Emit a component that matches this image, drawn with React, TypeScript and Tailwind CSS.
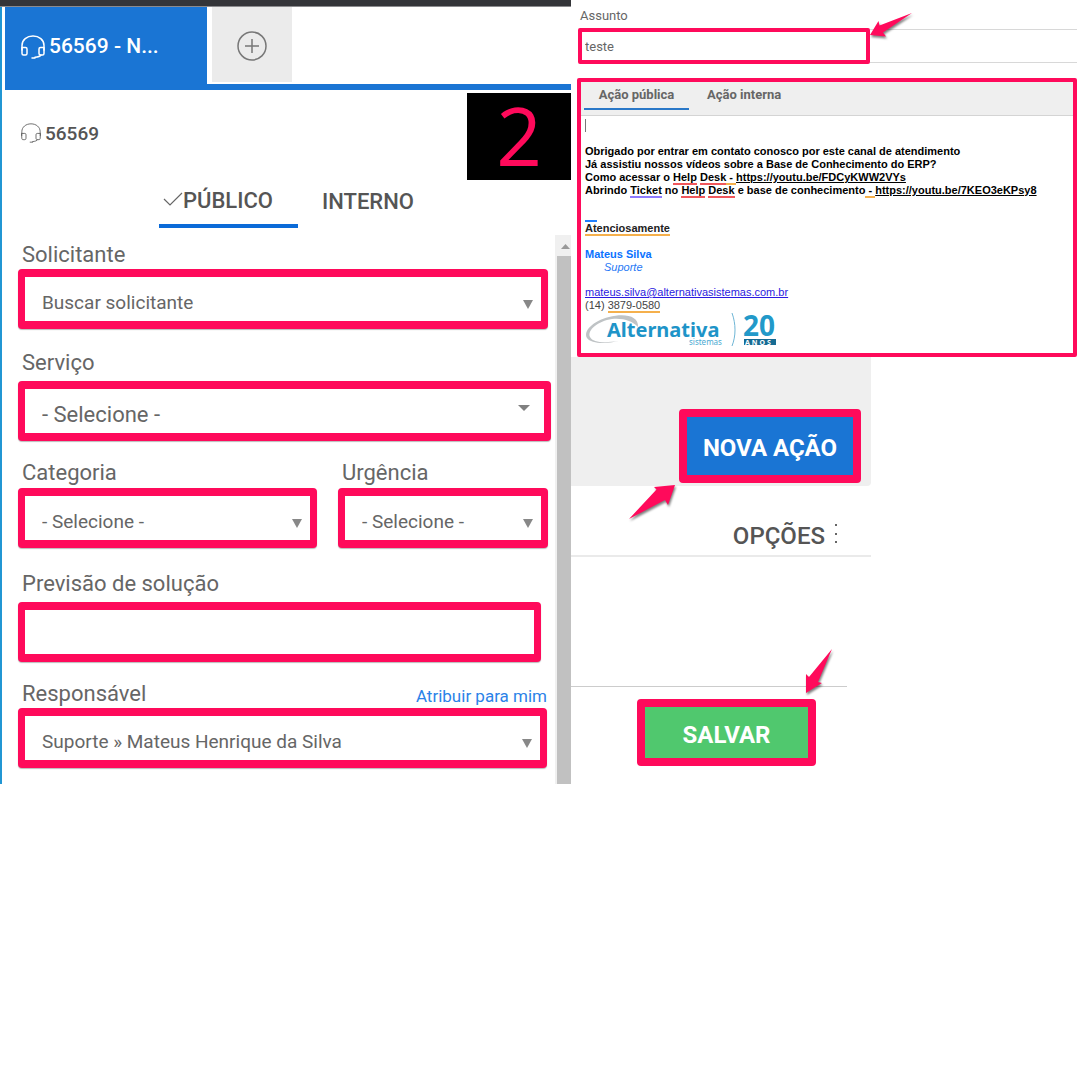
import React from "react";

function Headset({ className }: { className: string }) {
  return (
    <svg viewBox="0 0 24 24" fill="none" stroke="currentColor" strokeLinecap="round" strokeLinejoin="round" className={className} aria-hidden="true">
      <path d="M1 15V10.500C1 4.800 5.900 1 12 1s11 3.800 11 9.500V15" />
      <path d="M1 12.500h3.500c.9 0 1.500.6 1.500 1.500v4.500c0 .9-.6 1.500-1.500 1.500H2.500c-1 0-1.500-.6-1.500-1.500z" />
      <path d="M23 12.500h-3.500c-.9 0-1.500.6-1.500 1.500v4.500c0 .9.600 1.500 1.500 1.500h2c1 0 1.500-.6 1.500-1.500z" />
      <path d="M20 20c-1 1.500-3 2-6 2.300M11 23h3" />
    </svg>
  );
}

function Frame({ children }: { children: React.ReactNode }) {
  return (
    <div className="relative h-[60px] rounded-[4px] border-x-[7px] border-y-8 border-[#ff0a5b] bg-white shadow-[0_1px_1px_#bbb]">
      {children}
    </div>
  );
}

function Select({ id, value, large = false }: { id: string; value: string; large?: boolean }) {
  return (
    <>
      <select
        id={id}
        defaultValue={value}
        className={`h-full w-full appearance-none bg-transparent pl-[17px] text-[#666] outline-none ${large ? "pt-[6px] text-[22px]" : "pt-2 text-[19px]"}`}
      >
        <option>{value}</option>
      </select>
      {large ? (
        <svg viewBox="0 0 12 6" className="pointer-events-none absolute top-4 right-[14px] h-[6px] w-3" aria-hidden="true">
          <path d="M0 0h12L6 6z" fill="#808080" />
        </svg>
      ) : (
        <svg viewBox="0 0 10 9" className="pointer-events-none absolute top-[23px] right-2 h-[9px] w-[10px]" aria-hidden="true">
          <path d="M0 0h10L5 9z" fill="#888" />
        </svg>
      )}
    </>
  );
}

function Arrow({ className, d, box }: { className: string; d: string; box: string }) {
  return (
    <svg viewBox={box} className={`pointer-events-none absolute overflow-visible drop-shadow-[1px_2px_1px_rgba(0,0,0,0.5)] ${className}`} aria-hidden="true">
      <path d={d} fill="#ff0a5b" />
    </svg>
  );
}

const label = "block pt-0.5 text-[22px] leading-7 text-[#666]";

function TicketPanel() {
  return (
    <section className="flex flex-col">
      <div className="h-[7px] border-b border-[#8b8b8e] bg-[#343539]" />
      <div className="flex grow flex-col border-l-2 border-[#2196d3]">
        <nav className="ml-[3px] flex h-[83px] border-b-[6px] border-[#1a75d4]">
          <button type="button" className="-mb-[6px] flex w-[202px] items-center gap-1 bg-[#1a75d4] pl-4 text-[21px] font-medium text-white">
            <Headset className="mb-1 size-6 stroke-[1.5]" />
            <span className="mb-[3px]">56569 - N...</span>
          </button>
          <button type="button" aria-label="Novo" className="mb-[2px] ml-[5px] flex w-20 items-center justify-center bg-[#ebebeb] text-[#777]">
            <svg viewBox="0 0 30 30" fill="none" stroke="currentColor" strokeWidth="1.5" className="mt-0.5 size-[30px]" aria-hidden="true">
              <circle cx="15" cy="15" r="14" />
              <path d="M15 8v14M8 15h14" />
            </svg>
          </button>
        </nav>
        <div className="flex justify-between pt-[3px]">
          <h1 className="flex h-[82px] items-center gap-1 pl-[19px] text-[19px] font-medium text-[#555]">
            <Headset className="mb-0.5 size-5 stroke-1" />
            56569
          </h1>
          <div className="flex h-[87px] w-[104px] items-center justify-center bg-black pb-1 font-['Open_Sans',sans-serif] text-[80px] leading-none text-[#ff0a5b]">
            2
          </div>
        </div>
        <div className="ml-[157px] flex text-[22px] leading-[30px] font-medium text-[#555]">
          <button type="button" className="flex h-12 w-[139px] items-center border-b-4 border-[#0b6bd8] pb-0.5 pl-1">
            <svg viewBox="0 0 20 14" fill="none" stroke="#666" strokeWidth="1.2" className="mb-1 h-[14px] w-5" aria-hidden="true">
              <path d="M1 7l6 6L19 1" />
            </svg>
            PÚBLICO
          </button>
          <button type="button" className="ml-6 flex h-12 items-center pb-1">INTERNO</button>
        </div>
        <div className="flex grow pt-[7px]">
          <form className="flex grow flex-col gap-4 pt-1 pr-1 pb-4 pl-4">
            <div className="mr-[3px]">
              <label htmlFor="solicitante" className={`${label} pl-1`}>Solicitante</label>
              <Frame><Select id="solicitante" value="Buscar solicitante" /></Frame>
            </div>
            <div className="pt-0.5">
              <label htmlFor="servico" className={`${label} mb-1 pl-1`}>Serviço</label>
              <Frame><Select id="servico" value="- Selecione -" large /></Frame>
            </div>
            <div className="mr-[3px] grid grid-cols-[299fr_210fr] gap-[21px]">
              <div>
                <label htmlFor="categoria" className={`${label} mb-px pl-1`}>Categoria</label>
                <Frame><Select id="categoria" value="- Selecione -" /></Frame>
              </div>
              <div>
                <label htmlFor="urgencia" className={`${label} mb-px pl-1`}>Urgência</label>
                <Frame><Select id="urgencia" value="- Selecione -" /></Frame>
              </div>
            </div>
            <div className="mr-[10px] pt-1">
              <label htmlFor="previsao" className={`${label} mb-1 pl-1`}>Previsão de solução</label>
              <Frame><input id="previsao" type="text" className="h-full w-full px-4 text-[19px] outline-none" /></Frame>
            </div>
            <div className="mr-1">
              <div className="flex items-end justify-between">
                <label htmlFor="responsavel" className={`${label} pl-1`}>Responsável</label>
                <a href="#atribuir" className="text-[17px] leading-6 text-[#2b82e8]">Atribuir para mim</a>
              </div>
              <Frame><Select id="responsavel" value="Suporte » Mateus Henrique da Silva" /></Frame>
            </div>
          </form>
          <div className="flex w-4 flex-col bg-[#f0f0f0] pl-0.5" aria-hidden="true">
            <svg viewBox="0 0 14 21" className="h-[21px] w-[14px]">
              <path d="M4 14h9L8.500 9z" fill="#999" />
            </svg>
            <div className="grow bg-[#c1c1c1]" />
          </div>
        </div>
      </div>
    </section>
  );
}

function Logo() {
  return (
    <svg viewBox="0 0 194 36" className="h-9 w-[194px] overflow-visible" role="img" aria-label="Alternativa sistemas 20 anos">
      <path d="M53 15C54 4 40 1 24 5 8 9-2 19 2 26c4 6 19 6 32 3-14 2-26 2-29-4C2 18 13 9 27 7c12-1 20 2 26 8z" fill="#bfc3c5" />
      <text x="22" y="25" fontFamily="Noto Sans, sans-serif" fontWeight="700" fontSize="20" fill="#1e94c8">Alternativa</text>
      <text x="104" y="33" fontFamily="Noto Sans, sans-serif" fontSize="8" fill="#4aa9d2">sistemas</text>
      <path d="M147 1c4 11 4 23 0 33" fill="none" stroke="#6fb6d6" />
      <text x="158" y="24" fontFamily="Noto Sans, sans-serif" fontWeight="700" fontSize="28" fill="#2299c9">20</text>
      <rect x="159" y="27" width="32" height="6" fill="#176b93" />
      <text x="160" y="33" fontFamily="Noto Sans, sans-serif" fontWeight="700" fontSize="7" letterSpacing="2" fill="#fff">ANOS</text>
    </svg>
  );
}

const red = "border-b-2 border-[#f0575c]";
const orange = "border-b-2 border-[#f5b04c]";
const violet = "border-b-2 border-[#8f7bff]";

function ActionPanel() {
  return (
    <section className="flex flex-col">
      <div className="flex flex-col pt-2 pr-[3px] pl-[6px]">
        <label htmlFor="assunto" className="pl-[3px] text-[13px] leading-4 text-[#666]">Assunto</label>
        <div className="relative mt-1 ml-px flex h-9">
          <div className="w-[292px] rounded-[2px] border-4 border-[#ff0a5b]">
            <input id="assunto" defaultValue="teste" className="h-full w-full pl-[3px] text-[13px] text-[#666] outline-none" />
          </div>
          <div className="my-px grow border-y border-[#d8d8d8]" />
          <Arrow className="-top-[15px] left-[292px] h-6 w-[42px]" box="0 0 42 24" d="M0 22L8.500 8l1 4.500L42 0 13 19.500l3 4z" />
        </div>
        <div className="mt-[14px] h-[279px] rounded-[2px] border-4 border-[#ff0a5b] bg-white">
          <div className="flex h-[34px] gap-[3px] border-b border-[#d4d4d4] bg-[#efefef] pl-[3px] text-[13px] leading-6 font-bold text-[#666]">
            <button type="button" className="h-7 w-[105px] border-b-2 border-[#2a78c8]">Ação pública</button>
            <button type="button" className="h-7 border-b-2 border-transparent px-[15px]">Ação interna</button>
          </div>
          <div className="pl-1 font-['Liberation_Sans',Arial,sans-serif] text-[11px] leading-[13px]">
            <div className="mt-[3px] mb-[13px] h-[13px] w-px bg-[#777]" />
            <p className="font-bold whitespace-nowrap text-black">
              Obrigado por entrar em contato conosco por este canal de atendimento<br />
              Já assistiu nossos vídeos sobre a Base de Conhecimento do ERP?<br />
              Como acessar o <span className={red}>Help</span> <span className={red}>Desk</span><span className={orange}> - </span><a href="https://youtu.be/FDCyKWW2VYs" className="underline">https://youtu.be/FDCyKWW2VYs</a><br />
              Abrindo <span className={violet}>Ticket</span> no <span className={red}>Help</span> <span className={red}>Desk</span> e base de conhecimento<span className={orange}> - </span><a href="https://youtu.be/7KEO3eKPsy8" className="underline">https://youtu.be/7KEO3eKPsy8</a>
            </p>
            <div className="mt-[23px] h-0.5 w-3 bg-[#2080ff]" />
            <p className="font-bold text-[#222]"><span className={orange}>Atenciosamente</span></p>
            <p className="mt-[13px] font-bold text-[#0a72ff]">Mateus Silva</p>
            <p className="pl-[19px] text-[#1f78f5] italic">Suporte</p>
            <p className="mt-3"><a href="mailto:mateus.silva@alternativasistemas.com.br" className="text-[#2a1ae0] underline">mateus.silva@alternativasistemas.com.br</a></p>
            <p className="text-[#444]">(14) <span className={orange}>3879-0580</span></p>
            <Logo />
          </div>
        </div>
      </div>
      <div className="mr-[209px] flex h-[129px] items-end justify-end rounded-br-[4px] bg-[#efefef] pr-[10px] pb-[3px]">
        <div className="relative">
          <button type="button" className="h-[74px] w-[182px] rounded-[4px] border-8 border-[#ff0a5b] bg-[#1a75d4] pt-1 text-[24px] font-bold text-white">NOVA AÇÃO</button>
          <Arrow className="top-[76px] -left-[50px] h-[35px] w-[46px]" box="0 0 46 35" d="M0 34L27.500 4.500 25 2 46 0 39 20l-3-5z" />
        </div>
      </div>
      <div className="mr-[209px] flex h-[71px] items-end justify-end border-b-2 border-[#eaeaea] pr-[33px] pb-1">
        <button type="button" className="flex items-center gap-[9px] text-[24px] leading-[30px] font-medium text-[#555]">
          OPÇÕES
          <svg viewBox="0 0 4 20" className="mb-1 h-5 w-1" fill="#666" aria-hidden="true">
            <path d="M1 0h2v2H1zM1 9h2v2H1zM1 17h2v2H1z" />
          </svg>
        </button>
      </div>
      <div className="mr-[233px] h-[130px] border-b border-[#ccc]" />
      <div className="mr-[264px] flex justify-end pt-3">
        <div className="relative">
          <button type="button" className="h-[67px] w-[179px] rounded-[4px] border-8 border-[#ff0a5b] bg-[#50c86e] pt-1 text-[24px] font-bold text-white">SALVAR</button>
          <Arrow className="-top-[50px] left-[169px] h-[44px] w-[26px]" box="0 0 26 44" d="M26 0L12 33l4 1L0 44V25l3 3z" />
        </div>
      </div>
    </section>
  );
}

export default function App() {
  return (
    <main className="min-h-screen bg-white font-[Roboto,sans-serif]">
      <div className="grid grid-cols-[571fr_509fr]">
        <TicketPanel />
        <ActionPanel />
      </div>
    </main>
  );
}
